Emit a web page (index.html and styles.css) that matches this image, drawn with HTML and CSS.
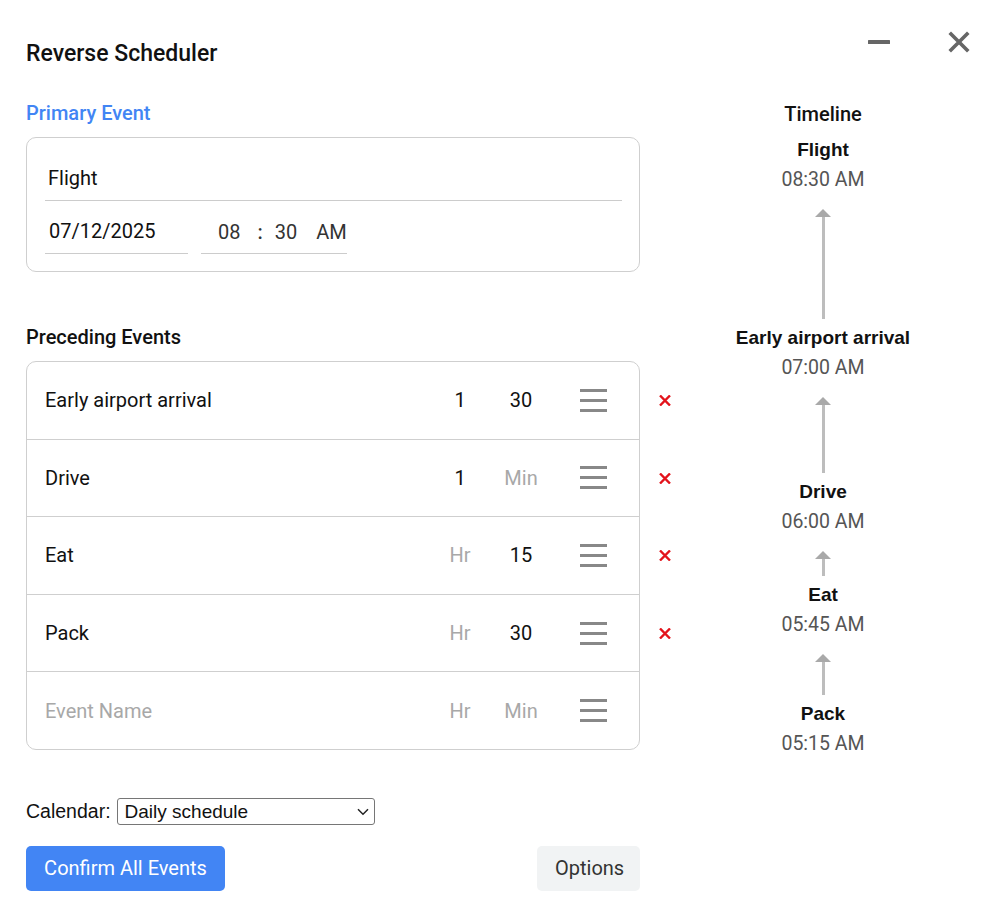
FILE: index.html
```html
<!DOCTYPE html>
<html lang="en">
<head>
<meta charset="utf-8">
<title>Reverse Scheduler</title>
<link rel="stylesheet" href="styles.css">
</head>
<body>
<div class="app">
  <header class="topbar">
    <h1 class="title">Reverse Scheduler</h1>
    <div class="window-controls">
      <button class="icon-btn" aria-label="Minimize">
        <svg class="icon-min" width="22" height="22" viewBox="0 0 22 22"><rect x="0" y="9" width="22" height="4" rx="0.5" fill="#666"/></svg>
      </button>
      <button class="icon-btn" aria-label="Close">
        <svg class="icon-close" width="22" height="22" viewBox="0 0 22 22"><path d="M3 3 L19 19 M19 3 L3 19" stroke="#666" stroke-width="3.6" stroke-linecap="square" fill="none"/></svg>
      </button>
    </div>
  </header>

  <div class="main">
    <section class="editor">
      <h2 class="section-label primary-label">Primary Event</h2>
      <div class="card primary-card">
        <input class="field name-field" type="text" value="Flight">
        <div class="datetime">
          <input class="field date-field" type="text" value="07/12/2025">
          <div class="field time-field">
            <span class="seg">08</span><span class="sep">:</span><span class="seg seg-min">30</span><span class="seg seg-ampm">AM</span>
          </div>
        </div>
      </div>

      <h2 class="section-label preceding-label">Preceding Events</h2>
      <div class="events">
        <div class="card event-card">
          <div class="event-row">
            <input class="ev-name" type="text" value="Early airport arrival">
            <input class="ev-hr" type="text" value="1" placeholder="Hr">
            <input class="ev-min" type="text" value="30" placeholder="Min">
            <svg class="drag" width="27" height="23" viewBox="0 0 27 23"><rect y="0" width="27" height="3" fill="#888"/><rect y="10" width="27" height="3" fill="#888"/><rect y="20" width="27" height="3" fill="#888"/></svg>
          </div>
          <div class="event-row">
            <input class="ev-name" type="text" value="Drive">
            <input class="ev-hr" type="text" value="1" placeholder="Hr">
            <input class="ev-min" type="text" value="" placeholder="Min">
            <svg class="drag" width="27" height="23" viewBox="0 0 27 23"><rect y="0" width="27" height="3" fill="#888"/><rect y="10" width="27" height="3" fill="#888"/><rect y="20" width="27" height="3" fill="#888"/></svg>
          </div>
          <div class="event-row">
            <input class="ev-name" type="text" value="Eat">
            <input class="ev-hr" type="text" value="" placeholder="Hr">
            <input class="ev-min" type="text" value="15" placeholder="Min">
            <svg class="drag" width="27" height="23" viewBox="0 0 27 23"><rect y="0" width="27" height="3" fill="#888"/><rect y="10" width="27" height="3" fill="#888"/><rect y="20" width="27" height="3" fill="#888"/></svg>
          </div>
          <div class="event-row">
            <input class="ev-name" type="text" value="Pack">
            <input class="ev-hr" type="text" value="" placeholder="Hr">
            <input class="ev-min" type="text" value="30" placeholder="Min">
            <svg class="drag" width="27" height="23" viewBox="0 0 27 23"><rect y="0" width="27" height="3" fill="#888"/><rect y="10" width="27" height="3" fill="#888"/><rect y="20" width="27" height="3" fill="#888"/></svg>
          </div>
          <div class="event-row">
            <input class="ev-name" type="text" value="" placeholder="Event Name">
            <input class="ev-hr" type="text" value="" placeholder="Hr">
            <input class="ev-min" type="text" value="" placeholder="Min">
            <svg class="drag" width="27" height="23" viewBox="0 0 27 23"><rect y="0" width="27" height="3" fill="#888"/><rect y="10" width="27" height="3" fill="#888"/><rect y="20" width="27" height="3" fill="#888"/></svg>
          </div>
        </div>
        <div class="delete-col">
          <div class="del-cell"><svg width="12" height="11" viewBox="0 0 12 11"><path d="M1 0.5 L11 10.5 M11 0.5 L1 10.5" stroke="#e3131b" stroke-width="2.4" fill="none"/></svg></div>
          <div class="del-cell"><svg width="12" height="11" viewBox="0 0 12 11"><path d="M1 0.5 L11 10.5 M11 0.5 L1 10.5" stroke="#e3131b" stroke-width="2.4" fill="none"/></svg></div>
          <div class="del-cell"><svg width="12" height="11" viewBox="0 0 12 11"><path d="M1 0.5 L11 10.5 M11 0.5 L1 10.5" stroke="#e3131b" stroke-width="2.4" fill="none"/></svg></div>
          <div class="del-cell"><svg width="12" height="11" viewBox="0 0 12 11"><path d="M1 0.5 L11 10.5 M11 0.5 L1 10.5" stroke="#e3131b" stroke-width="2.4" fill="none"/></svg></div>
        </div>
      </div>

      <div class="calendar-row">
        <label class="calendar-label" for="cal">Calendar:</label>
        <div class="select-wrap">
          <select id="cal" class="calendar-select">
            <option>Daily schedule</option>
          </select>
          <svg class="select-chevron" width="12" height="8" viewBox="0 0 12 8"><path d="M1 1.2 L6 6.2 L11 1.2" stroke="#222" stroke-width="1.5" fill="none"/></svg>
        </div>
      </div>

      <div class="actions">
        <button class="btn btn-primary">Confirm All Events</button>
        <button class="btn btn-secondary">Options</button>
      </div>
    </section>

    <aside class="timeline">
      <div class="timeline-title">Timeline</div>
      <div class="tl-item"><div class="tl-name">Flight</div><div class="tl-time">08:30 AM</div></div>
      <div class="tl-arrow" style="height:110px"></div>
      <div class="tl-item"><div class="tl-name">Early airport arrival</div><div class="tl-time">07:00 AM</div></div>
      <div class="tl-arrow" style="height:76px"></div>
      <div class="tl-item"><div class="tl-name">Drive</div><div class="tl-time">06:00 AM</div></div>
      <div class="tl-arrow" style="height:25px"></div>
      <div class="tl-item"><div class="tl-name">Eat</div><div class="tl-time">05:45 AM</div></div>
      <div class="tl-arrow" style="height:41px"></div>
      <div class="tl-item"><div class="tl-name">Pack</div><div class="tl-time">05:15 AM</div></div>
    </aside>
  </div>
</div>
</body>
</html>
```

FILE: styles.css
```css
* { box-sizing: border-box; }

html, body {
  margin: 0;
  padding: 0;
  background: #ffffff;
}

body {
  font-family: Roboto, "Noto Sans", Arial, sans-serif;
  color: #111;
}

.app {
  padding: 31px 30px 0 26px;
}

.topbar {
  display: flex;
  justify-content: space-between;
  align-items: flex-start;
}

.title {
  margin: 8px 0 0;
  font-size: 23px;
  line-height: 30px;
  font-weight: 500;
  color: #111;
}

.window-controls {
  display: flex;
  gap: 58px;
  align-items: flex-start;
}

.icon-btn {
  border: none;
  background: none;
  padding: 0;
  margin: 0;
  display: block;
  width: 22px;
  height: 22px;
}

.icon-btn svg { display: block; }

.main {
  display: flex;
  gap: 60px;
  margin-top: 32px;
}

.editor {
  width: 614px;
  flex: none;
}

.section-label {
  margin: 0;
  font-size: 20px;
  line-height: 24px;
  font-weight: 500;
}

.primary-label {
  color: #4285f4;
  margin-bottom: 12px;
}

.preceding-label {
  color: #111;
  margin-top: 53px;
  margin-bottom: 12px;
}

.card {
  border: 1px solid #cfcfcf;
  border-radius: 10px;
  background: #fff;
}

.primary-card {
  padding: 18px 17px 17px 18px;
}

.field {
  display: block;
  border: none;
  border-bottom: 1px solid #cccccc;
  outline: none;
  background: transparent;
  font-family: Roboto, "Noto Sans", Arial, sans-serif;
  font-size: 20px;
  line-height: 24px;
  height: 45px;
  padding: 10px 3px;
  color: #111;
  margin: 0;
}

.name-field { width: 100%; }

.datetime {
  display: flex;
  gap: 13px;
  margin-top: 8px;
}

.date-field {
  width: 143px;
  padding-left: 4px;
}

.time-field {
  width: 146px;
  display: flex;
  padding: 11px 0 9px 17px;
  color: #333;
}

.sep { margin-left: 17px; font-weight: 500; }
.seg-min { margin-left: 12px; }
.seg-ampm { margin-left: 19px; }

.events {
  display: flex;
  align-items: flex-start;
}

.event-card {
  width: 614px;
  flex: none;
}

.event-row {
  display: flex;
  align-items: center;
  height: 77.6px;
  padding: 0 32px 0 18px;
  border-bottom: 1px solid #cfcfcf;
}

.event-row:last-child {
  border-bottom: none;
  height: 76.6px;
}

.event-row input {
  border: none;
  outline: none;
  background: transparent;
  font-family: Roboto, "Noto Sans", Arial, sans-serif;
  font-size: 20px;
  line-height: 24px;
  color: #111;
  padding: 0;
  margin: 0;
  min-width: 0;
}

.event-row input::placeholder {
  color: #a8a8a8;
  opacity: 1;
}

.ev-name { flex: 1; }

.ev-hr {
  width: 40px;
  text-align: center;
}

.ev-min {
  width: 50px;
  margin-left: 16px !important;
  text-align: center;
}

.drag {
  flex: none;
  margin-left: 34px;
  display: block;
}

.delete-col {
  display: flex;
  flex-direction: column;
  padding-top: 1px;
}

.del-cell {
  width: 50px;
  height: 77.6px;
  display: flex;
  align-items: center;
  justify-content: center;
}

.del-cell svg { display: block; }

.calendar-row {
  display: flex;
  align-items: center;
  gap: 6px;
  margin-top: 48px;
  height: 27px;
}

.calendar-label {
  font-family: "Liberation Sans", Arial, sans-serif;
  font-size: 19.5px;
  color: #111;
}

.select-wrap {
  position: relative;
  width: 258px;
  height: 27px;
}

.calendar-select {
  -webkit-appearance: none;
  appearance: none;
  display: block;
  width: 258px;
  height: 27px;
  font-family: "Liberation Sans", Arial, sans-serif;
  font-size: 19px;
  color: #111;
  border: 1px solid #767676;
  border-radius: 3px;
  background: #fff;
  padding: 0 24px 0 7px;
  margin: 0;
}

.select-chevron {
  position: absolute;
  right: 6px;
  top: 10px;
  pointer-events: none;
}

.actions {
  display: flex;
  justify-content: space-between;
  margin-top: 21px;
}

.btn {
  height: 45px;
  border: none;
  border-radius: 5px;
  font-family: Roboto, "Noto Sans", Arial, sans-serif;
  font-size: 20px;
  padding: 0 18px;
}

.btn-primary {
  width: 199px;
  background: #4285f4;
  color: #fff;
}

.btn-secondary {
  width: 103px;
  background: #f1f3f4;
  color: #333;
}

.timeline {
  width: 246px;
  flex: none;
  display: flex;
  flex-direction: column;
  align-items: center;
  text-align: center;
  padding-top: 1px;
}

.timeline-title {
  font-size: 20px;
  line-height: 24px;
  font-weight: 500;
  color: #111;
  margin-bottom: 9px;
}

.tl-name {
  font-family: "Liberation Sans", Arial, sans-serif;
  font-weight: 700;
  font-size: 19px;
  line-height: 30px;
  color: #111;
  white-space: nowrap;
}

.tl-time {
  font-family: Roboto, "Noto Sans", Arial, sans-serif;
  font-size: 19.5px;
  line-height: 30px;
  color: #555;
}

.tl-arrow {
  display: flex;
  flex-direction: column;
  align-items: center;
  margin: 14px 0 4px;
}

.tl-arrow::before {
  content: "";
  width: 0;
  height: 0;
  border-left: 8px solid transparent;
  border-right: 8px solid transparent;
  border-bottom: 8px solid #a9a9a9;
  flex: none;
}

.tl-arrow::after {
  content: "";
  width: 3px;
  flex: 1;
  background: #bdbdbd;
}
```
